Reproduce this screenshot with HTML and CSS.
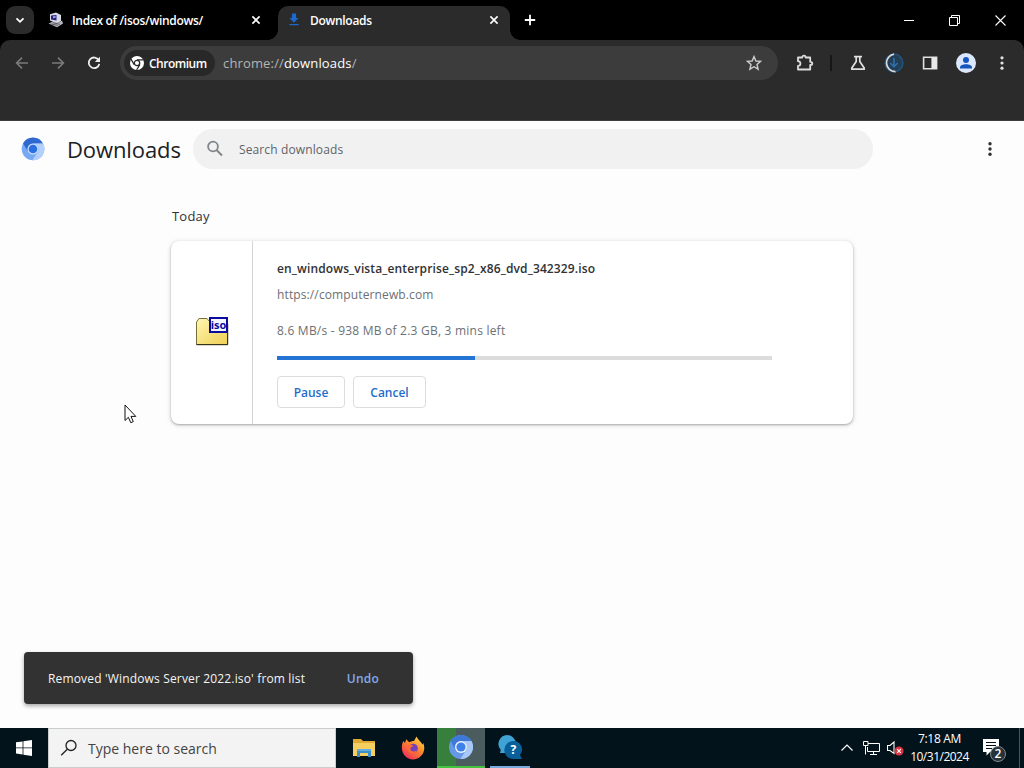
FILE: index.html
```html
<!DOCTYPE html>
<html lang="en">
<head>
    <meta charset="UTF-8">
    <meta name="viewport" content="width=device-width, initial-scale=1.0">
    <title>Downloads</title>
    <link rel="stylesheet" href="styles.css">
</head>
<body>
    <div class="desktop">
        <!-- Tab strip -->
        <div class="tab-strip">
            <button class="tab-search">
                <svg width="12" height="12" viewBox="0 0 12 12"><path d="M2.5 4.3L6 7.8L9.5 4.3" fill="none" stroke="#fff" stroke-width="1.8"/></svg>
            </button>
            <div class="tab">
                <svg class="tab-icon" width="16" height="16" viewBox="0 0 16 16">
                    <path d="M2 2.2L8 0.5L13 3V9L9 11.5L2 8.5Z" fill="#d9d9e6"/>
                    <path d="M3 3.4L8.5 3V8.4L3 7.6Z" fill="#25257a"/>
                    <path d="M5 4.2L7.6 4.1V5.8L5 6.2Z" fill="#9aa6ee"/>
                    <path d="M0.5 11.5L5 9.5L11 10.5L14 8.5L15 11.5L9 15.2Z" fill="#b9b9c4"/>
                    <path d="M2.5 11.9L10 13.4M4.5 10.7L12 12.3" stroke="#444" stroke-width="0.8"/>
                </svg>
                <span class="tab-title">Index of /isos/windows/</span>
                <svg class="tab-close" width="10" height="10" viewBox="0 0 10 10"><path d="M1.4 1.4L8.6 8.6M8.6 1.4L1.4 8.6" stroke="#fff" stroke-width="1.6"/></svg>
            </div>
            <div class="tab active">
                <svg class="tab-icon" width="16" height="16" viewBox="0 0 16 16"><path d="M5.9 1.5H10.1V6H12.6L8 10.8L3.4 6H5.9ZM3.4 12H12.6V13.3H3.4Z" fill="#1c68cc"/></svg>
                <span class="tab-title">Downloads</span>
                <svg class="tab-close" width="10" height="10" viewBox="0 0 10 10"><path d="M1.4 1.4L8.6 8.6M8.6 1.4L1.4 8.6" stroke="#fff" stroke-width="1.6"/></svg>
            </div>
            <button class="new-tab">
                <svg width="12" height="12" viewBox="0 0 12 12"><path d="M6 0.8V11.2M0.8 6H11.2" stroke="#fff" stroke-width="1.8"/></svg>
            </button>
            <div class="window-controls">
                <svg width="10" height="10" viewBox="0 0 10 10"><path d="M0 5.5H10" stroke="#fff"/></svg>
                <svg width="11" height="11" viewBox="0 0 11 11"><path d="M0.5 2.5H8.5V10.5H0.5ZM2.5 2.5V0.5H10.5V8.5H8.5" fill="none" stroke="#fff"/></svg>
                <svg width="11" height="11" viewBox="0 0 11 11"><path d="M0.5 0.5L10.5 10.5M10.5 0.5L0.5 10.5" stroke="#fff" stroke-width="1.1"/></svg>
            </div>
        </div>

        <!-- Toolbar -->
        <div class="toolbar-area">
            <div class="toolbar">
                <svg class="nav-icon" width="16" height="16" viewBox="0 0 16 16"><path d="M14 8H2.8M8 2.6L2.6 8L8 13.4" fill="none" stroke="#7b7b7b" stroke-width="1.6"/></svg>
                <svg class="nav-icon" width="16" height="16" viewBox="0 0 16 16"><path d="M2 8H13.2M8 2.6L13.4 8L8 13.4" fill="none" stroke="#7b7b7b" stroke-width="1.6"/></svg>
                <svg class="nav-icon" width="16" height="16" viewBox="0 0 16 16"><path d="M12.7 5.2A5.3 5.3 0 1 0 13.3 8.8" fill="none" stroke="#eee" stroke-width="1.8"/><path d="M14 1.8V7H8.8Z" fill="#eee"/></svg>
                <div class="omnibox">
                    <div class="site-chip">
                        <svg width="14" height="14" viewBox="0 0 14 14">
                            <circle cx="7" cy="7" r="7" fill="#fff"/>
                            <circle cx="7" cy="7" r="2.7" fill="#fff" stroke="#282828" stroke-width="1.3"/>
                            <path d="M7 3.8H13.4M4.2 8.6L1 3.1M9.8 8.6L6.6 14" stroke="#282828" stroke-width="1.2"/>
                        </svg>
                        <span>Chromium</span>
                    </div>
                    <span class="address">chrome://<b>downloads</b>/</span>
                    <svg class="star" width="16" height="16" viewBox="0 0 16 16"><path d="M8 1.6L9.9 6L14.6 6.4L11 9.5L12.1 14.2L8 11.7L3.9 14.2L5 9.5L1.4 6.4L6.1 6Z" fill="none" stroke="#ccc" stroke-width="1.4"/></svg>
                </div>
                <svg class="extensions" width="20" height="20" viewBox="0 0 20 20"><path d="M3 4.5H7.2C7.2 2 10.6 2 10.6 4.5H15.2V8.8C18 8.8 18 12 15.2 12V16.5H3V13C6.2 13 6.2 8.2 3 8.2Z" fill="none" stroke="#ddd" stroke-width="1.8" stroke-linejoin="round"/></svg>
                <span class="divider"></span>
                <div class="actions">
                    <svg width="20" height="20" viewBox="0 0 20 20"><path d="M6 3.6H14M8.2 3.6V8.6L3.8 15V16.2H16.2V15L11.8 8.6V3.6" fill="none" stroke="#e0e0e0" stroke-width="1.7" stroke-linejoin="round"/></svg>
                    <svg width="20" height="20" viewBox="0 0 20 20">
                        <circle cx="10" cy="10" r="8" fill="#243e56"/>
                        <circle cx="10" cy="10" r="8.8" fill="none" stroke="#23537d" stroke-width="1.7"/>
                        <path d="M10 1.2A8.8 8.8 0 0 0 11.5 18.7" fill="none" stroke="#d8d8d8" stroke-width="1.7"/>
                        <path d="M10 5V13.5M6.3 10L10 13.7L13.7 10" fill="none" stroke="#2f70ac" stroke-width="1.6"/>
                    </svg>
                    <svg width="20" height="20" viewBox="0 0 20 20"><path d="M3.6 4.2H16.6V15.8H3.6Z" fill="none" stroke="#e0e0e0" stroke-width="1.6"/><path d="M11.4 4.2H16.6V15.8H11.4Z" fill="#e8e8e8"/></svg>
                    <svg width="20" height="20" viewBox="0 0 20 20"><circle cx="10" cy="10" r="10" fill="#dbe7fb"/><circle cx="10" cy="7" r="3" fill="#1556bd"/><path d="M4 15.6V14.6C4 12.4 7 11.3 10 11.3S16 12.4 16 14.6V15.6Z" fill="#1556bd"/></svg>
                    <svg width="20" height="20" viewBox="0 0 20 20" fill="#e3e3e3"><circle cx="10" cy="4.8" r="1.6"/><circle cx="10" cy="10" r="1.6"/><circle cx="10" cy="15.2" r="1.6"/></svg>
                </div>
            </div>
        </div>

        <!-- Downloads page -->
        <div class="page">
            <div class="page-header">
                <svg class="logo" width="24" height="24" viewBox="0 0 24 24">
                    <circle cx="12" cy="12" r="11.3" fill="#76a8f4"/>
                    <path d="M2 6.5A11.3 11.3 0 0 1 22 6.5H12A5.7 5.7 0 0 0 6.8 14Z" fill="#2f68d0"/>
                    <path d="M22 6.5A11.3 11.3 0 0 1 11.3 23.3L17 14.8A5.7 5.7 0 0 0 12 6.5Z" fill="#b3d0fb"/>
                    <circle cx="12" cy="12" r="5.5" fill="#c9defc"/>
                    <circle cx="12" cy="12" r="4.3" fill="#2b70e0"/>
                </svg>
                <h1>Downloads</h1>
                <div class="search-box">
                    <svg width="20" height="20" viewBox="0 0 20 20"><circle cx="8" cy="7.5" r="4.9" fill="none" stroke="#80868b" stroke-width="1.8"/><path d="M11.5 11L17 16.5" stroke="#80868b" stroke-width="2"/></svg>
                    <span>Search downloads</span>
                </div>
                <svg class="page-menu" width="20" height="20" viewBox="0 0 20 20" fill="#303134"><circle cx="10" cy="4.8" r="1.7"/><circle cx="10" cy="10" r="1.7"/><circle cx="10" cy="15.2" r="1.7"/></svg>
            </div>
            <div class="downloads">
                <div class="date">Today</div>
                <div class="card">
                    <div class="file-icon">
                        <svg width="34" height="30" viewBox="0 0 34 30">
                            <defs>
                                <linearGradient id="folder" x1="0" y1="0" x2="1" y2="1"><stop offset="0" stop-color="#fff6b0"/><stop offset="1" stop-color="#efcf55"/></linearGradient>
                            </defs>
                            <path d="M1.5 6L4 2.5H12L15 6H32.5V28.5H1.5Z" fill="url(#folder)" stroke="#77703a"/>
                            <path d="M1.5 28.7H32.7V8" fill="none" stroke="#29260f"/>
                            <rect x="15" y="2" width="17" height="14" fill="#f4f6ff" stroke="#0b0ba0" stroke-width="2"/>
                            <text class="iso-label" x="23.5" y="13.3" text-anchor="middle">iso</text>
                        </svg>
                    </div>
                    <div class="details">
                        <div class="file-name">en_windows_vista_enterprise_sp2_x86_dvd_342329.iso</div>
                        <div class="file-url">https://computernewb.com</div>
                        <div class="status">8.6 MB/s - 938 MB of 2.3 GB, 3 mins left</div>
                        <div class="progress"><div class="progress-bar" style="width: 40%"></div></div>
                        <div class="buttons">
                            <button class="pause">Pause</button>
                            <button class="cancel">Cancel</button>
                        </div>
                    </div>
                </div>
            </div>
            <div class="toast">
                <span class="toast-text">Removed 'Windows Server 2022.iso' from list</span>
                <span class="undo">Undo</span>
            </div>
        </div>

        <!-- Taskbar -->
        <div class="taskbar">
            <div class="start">
                <svg width="16" height="16" viewBox="0 0 16 16" fill="#fff"><path d="M0 2.3L6.6 1.4V7.5H0ZM7.4 1.3L16 0V7.5H7.4ZM0 8.3H6.6V14.5L0 13.6ZM7.4 8.3H16V16L7.4 14.7Z"/></svg>
            </div>
            <div class="task-search">
                <svg width="18" height="18" viewBox="0 0 18 18"><circle cx="11" cy="6.5" r="5" fill="none" stroke="#222" stroke-width="1.3"/><path d="M7.3 10.2L1.2 16.3" stroke="#222" stroke-width="1.3"/></svg>
                <span>Type here to search</span>
            </div>
            <div class="task">
                <svg width="24" height="24" viewBox="0 0 24 24"><path d="M1 3H9L11 5H23V20H1Z" fill="#e0ab35"/><path d="M1 7H23V20H1Z" fill="#f6cf60"/><path d="M5 13H19V21H16V17H8V21H5Z" fill="#3c8ecb"/><path d="M5 13H19V15H5Z" fill="#63aee0"/></svg>
            </div>
            <div class="task">
                <svg width="24" height="24" viewBox="0 0 24 24">
                    <defs>
                        <linearGradient id="fox" x1="0.9" y1="0" x2="0.2" y2="1"><stop offset="0" stop-color="#ffe14b"/><stop offset="0.45" stop-color="#ff8a2a"/><stop offset="1" stop-color="#ee2860"/></linearGradient>
                    </defs>
                    <path d="M2.2 5L4 7L5.2 3.2L8.2 6.3C10 5.4 11.8 5 13 5L15.5 0.5C17 4 20 5.5 21.5 8.5C22.2 7.8 22.1 7 22 6.5C26 15 20 23.5 12 23.5C4 23.5-2 15 2.2 5Z" fill="url(#fox)"/>
                    <circle cx="12.3" cy="12.3" r="4.5" fill="#7441bd"/>
                    <path d="M5.5 9.5C8 8 10 9 12.2 9.6C11.8 11.3 9.5 11 9.3 12.6C9 15.5 13 16.5 15.5 14.5C14 19.3 6 18.3 5.5 9.5Z" fill="#ff6a35"/>
                </svg>
            </div>
            <div class="task current">
                <svg width="24" height="24" viewBox="0 0 24 24">
                    <circle cx="12" cy="12" r="12" fill="#6599e8"/>
                    <path d="M1.6 6A12 12 0 0 1 22.4 6H12A6 6 0 0 0 6.5 14.5Z" fill="#3f79d8"/>
                    <path d="M22.4 6A12 12 0 0 1 11.3 24L17.2 15A6 6 0 0 0 12 6Z" fill="#a9c8f8"/>
                    <circle cx="12" cy="12" r="6" fill="#eef5ff"/>
                    <circle cx="12" cy="12" r="4.6" fill="#3e82e8"/>
                </svg>
            </div>
            <div class="task running">
                <svg width="26" height="26" viewBox="0 0 26 26">
                    <path d="M10 1A9 9 0 0 1 19 10A9 9 0 0 1 10 19H3L3.8 16A9 9 0 0 1 10 1Z" fill="#3fa3d5"/>
                    <path d="M16.5 7A8.5 8.5 0 0 1 23 21L25 25H16A9 9 0 0 1 16.5 7Z" fill="#0b5f99"/>
                    <text class="help-label" x="16.3" y="20.4" text-anchor="middle">?</text>
                </svg>
            </div>
            <div class="tray">
                <svg width="14" height="14" viewBox="0 0 14 14"><path d="M1.5 9.5L7 4L12.5 9.5" fill="none" stroke="#fff" stroke-width="1.2"/></svg>
                <svg class="network" width="17" height="16" viewBox="0 0 17 16"><path d="M5 3.5H16.5V11.5H4.5M4.5 7V11.5M10.5 11.5V14.5M7 14.5H14M0.5 1.5H5V5.5H0.5ZM2.5 5.5V14.5" fill="none" stroke="#fff"/></svg>
                <svg class="volume" width="17" height="16" viewBox="0 0 17 16"><path d="M0.5 5.5H3L7 2V13.5L3 10.5H0.5Z" fill="none" stroke="#fff" stroke-width="1.1"/><circle cx="12" cy="11" r="4.5" fill="#dc3340"/><path d="M10.2 9.2L13.8 12.8M13.8 9.2L10.2 12.8" stroke="#fff" stroke-width="1.2"/></svg>
                <div class="clock">
                    <span class="time">7:18 AM</span>
                    <span class="day">10/31/2024</span>
                </div>
                <svg class="notifications" width="25" height="26" viewBox="0 0 25 26">
                    <path d="M1 2H17V15H8L4.5 18.5V15H1Z" fill="#fff"/>
                    <path d="M4 5.5H14M4 8.5H14M4 11.5H10" stroke="#051119"/>
                    <circle cx="16" cy="17" r="7.5" fill="#26323a" stroke="#84898c"/>
                    <text class="badge-label" x="16" y="21.4" text-anchor="middle">2</text>
                </svg>
                <span class="show-desktop"></span>
            </div>
        </div>

        <svg class="cursor" width="13" height="20" viewBox="0 0 13 20"><path d="M1 1V16.5L4.4 13.3L6.8 18.7L9.3 17.6L7 12.4H11.8Z" fill="#fff" stroke="#111"/></svg>
    </div>
</body>
</html>
```
FILE: styles.css
```css
* {
    box-sizing: border-box;
}
body {
    margin: 0;
    background-color: #fdfdfd;
    font-family: 'Open Sans', 'Noto Sans', sans-serif;
    font-size: 12px;
    white-space: nowrap;
}
svg {
    display: block;
    flex-shrink: 0;
}
button {
    font-family: inherit;
    cursor: pointer;
}
.desktop {
    position: relative;
    width: 1024px;
    height: 768px;
    overflow: hidden;
    display: flex;
    flex-direction: column;
}

/* Tab strip */
.tab-strip {
    height: 40px;
    background-color: #000;
    display: flex;
    align-items: center;
    padding-left: 6px;
    flex-shrink: 0;
}
.tab-search {
    width: 28px;
    height: 28px;
    border: none;
    border-radius: 9px;
    background-color: #2b2b2b;
    padding: 0;
    display: flex;
    align-items: center;
    justify-content: center;
}
.tab {
    width: 232px;
    height: 34px;
    margin-top: 6px;
    padding: 0 11px 6px 8px;
    display: flex;
    align-items: center;
    color: #fff;
    font-weight: 600;
}
.tab:not(.active) {
    width: 244px;
    padding-left: 14px;
    padding-right: 17px;
}
.tab.active {
    position: relative;
    background-color: #2b2b2b;
    border-radius: 10px 10px 0 0;
}
/* flared feet of the active tab */
.tab.active::before,
.tab.active::after {
    content: "";
    position: absolute;
    bottom: 0;
    width: 10px;
    height: 10px;
}
.tab.active::before {
    left: -10px;
    background: radial-gradient(circle at 0 0, transparent 9.5px, #2b2b2b 10px);
}
.tab.active::after {
    right: -10px;
    background: radial-gradient(circle at 100% 0, transparent 9.5px, #2b2b2b 10px);
}
.tab-title {
    margin-left: 8px;
    letter-spacing: -0.3px;
}
.tab-close {
    margin-left: auto;
}
.new-tab {
    border: none;
    background: none;
    padding: 0;
    margin-left: 14px;
}
.window-controls {
    display: flex;
    align-items: center;
    gap: 35px;
    margin-left: auto;
    padding-right: 18px;
}

/* Toolbar */
.toolbar-area {
    height: 81px;
    background-color: #000;
    flex-shrink: 0;
}
.toolbar {
    height: 81px;
    background-color: #2b2b2b;
    border-radius: 10px 10px 0 0;
    border-bottom: 1px solid #3c3c3c;
    display: flex;
    align-items: flex-start;
    padding: 6px 12px 0 14px;
}
.nav-icon {
    margin: 9px 20px 0 0;
}
.omnibox {
    width: 658px;
    height: 34px;
    margin-left: -2px;
    border-radius: 17px;
    background-color: #3c3c3c;
    display: flex;
    align-items: center;
    padding: 0 16px 0 4px;
}
.site-chip {
    width: 91px;
    height: 26px;
    border-radius: 13px;
    background-color: #282828;
    color: #fff;
    font-weight: 600;
    letter-spacing: -0.5px;
    display: flex;
    align-items: center;
    gap: 5px;
    padding-left: 6px;
}
.address {
    margin-left: 8px;
    color: #b4b4b4;
    font-size: 13px;
    letter-spacing: 0.15px;
}
.address b {
    color: #fff;
    font-weight: 400;
}
.star {
    margin-left: auto;
}
.extensions {
    margin: 7px 0 0 17px;
}
.divider {
    width: 2px;
    height: 16px;
    margin: 9px 0 0 15px;
    background-color: #161616;
}
.actions {
    display: flex;
    gap: 16px;
    margin: 7px 0 0 16px;
}

/* Downloads page */
.page {
    position: relative;
    height: 607px;
    background-color: #fdfdfd;
    flex-shrink: 0;
}
.page-header {
    height: 56px;
    display: flex;
    align-items: center;
    padding: 0 24px 0 21px;
}
.page-header h1 {
    width: 126px;
    margin: 0 0 0 22px;
    font-size: 22px;
    font-weight: 500;
    letter-spacing: -0.1px;
    color: #202124;
}
.search-box {
    width: 680px;
    height: 40px;
    border-radius: 20px;
    background-color: #f1f1f1;
    display: flex;
    align-items: center;
    gap: 14px;
    padding-left: 12px;
    color: #5f6368;
    letter-spacing: 0.12px;
}
.page-menu {
    margin-left: auto;
}
.downloads {
    width: 682px;
    margin: 30px auto 0;
}
.date {
    height: 34px;
    padding-left: 1px;
    font-size: 13px;
    letter-spacing: 0.2px;
    color: #303134;
}
.card {
    height: 183px;
    border-radius: 8px;
    background-color: #fff;
    box-shadow: 0 1px 2px rgba(60, 64, 67, 0.35), 0 1px 4px 1px rgba(60, 64, 67, 0.15);
    display: flex;
}
.file-icon {
    width: 82px;
    padding-bottom: 4px;
    border-right: 1px solid #d5d5d8;
    display: flex;
    align-items: center;
    justify-content: center;
}
.iso-label {
    font-family: 'Open Sans', sans-serif;
    font-size: 11px;
    font-weight: 700;
    fill: #0b0ba0;
}
.details {
    padding: 19px 0 0 24px;
}
.file-name {
    height: 26px;
    line-height: 18px;
    font-weight: 600;
    letter-spacing: 0.13px;
    color: #303134;
}
.file-url,
.status {
    line-height: 18px;
    color: #6c7074;
}
.file-url {
    letter-spacing: 0.12px;
}
.status {
    margin-top: 18px;
    letter-spacing: 0.22px;
}
.progress {
    width: 495px;
    height: 4px;
    margin-top: 16px;
    background-color: #dcdcdc;
}
.progress-bar {
    height: 4px;
    background-color: #2374d4;
}
.buttons {
    display: flex;
    gap: 8px;
    margin-top: 16px;
}
.buttons button {
    height: 32px;
    width: 68px;
    padding: 0;
    border: 1px solid #dadce0;
    border-radius: 4px;
    background-color: #fff;
    color: #1f6cc9;
    font-size: 12px;
    font-weight: 600;
}
.buttons .cancel {
    width: 73px;
}
.toast {
    position: absolute;
    left: 24px;
    bottom: 24px;
    width: 389px;
    height: 52px;
    border-radius: 4px;
    background-color: #323232;
    box-shadow: 0 2px 4px rgba(0, 0, 0, 0.35);
    display: flex;
    align-items: center;
    justify-content: space-between;
    padding: 0 34px 0 24px;
    color: #f5f5f5;
}
.toast-text {
    font-weight: 500;
    letter-spacing: 0.16px;
}
.undo {
    color: #82aaea;
    font-weight: 600;
    letter-spacing: 0.2px;
}

/* Taskbar */
.taskbar {
    height: 40px;
    background-color: #03131b;
    display: flex;
    flex-shrink: 0;
}
.start {
    width: 48px;
    display: flex;
    align-items: center;
    justify-content: center;
}
.task-search {
    width: 288px;
    margin-right: 3px;
    background-color: #f3f3f3;
    border: 1px solid #c8cccd;
    display: flex;
    align-items: center;
    gap: 10px;
    padding-left: 11px;
    font-size: 14px;
    color: #444;
}
.task {
    width: 49px;
    display: flex;
    align-items: center;
    justify-content: center;
}
.task.current {
    width: 48px;
    background: linear-gradient(to right, #387f3d 19px, #4a5c5d 19px);
    border-bottom: 2px solid #45c340;
}
.task.running {
    border-bottom: 2px solid #76a9dc;
    width: 40px;
    margin-left: 5px;
}
.help-label {
    font-family: 'Open Sans', sans-serif;
    font-size: 12px;
    font-weight: 700;
    fill: #fff;
}
.tray {
    margin-left: auto;
    display: flex;
    align-items: center;
    color: #fff;
}
.network {
    margin-left: 9px;
}
.volume {
    margin-left: 7px;
}
.clock {
    width: 70px;
    display: flex;
    flex-direction: column;
    align-items: center;
    padding-left: 1px;
    line-height: 18px;
    font-size: 12px;
    letter-spacing: -0.5px;
}
.clock .time {
    letter-spacing: -0.3px;
}
.notifications {
    margin: 4px 0 0 8px;
}
.badge-label {
    font-family: 'Open Sans', sans-serif;
    font-size: 12px;
    font-weight: 600;
    fill: #fff;
}
.show-desktop {
    width: 5px;
    height: 40px;
    margin-left: 12px;
    border-left: 1px solid #4a555b;
}

/* Mouse pointer, drawn above the windows */
.cursor {
    position: absolute;
    left: 124px;
    top: 404px;
}
```
